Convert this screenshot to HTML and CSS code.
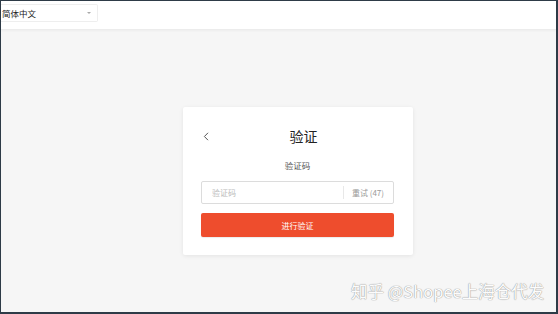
FILE: index.html
```html
<!DOCTYPE html>
<html lang="zh-CN">
<head>
<meta charset="utf-8">
<title>验证</title>
<link rel="stylesheet" href="styles.css">
</head>
<body>
<div class="frame">
  <header class="topbar">
    <div class="lang-select">
      <span class="lang-text">简体中文</span>
      <span class="caret"></span>
    </div>
  </header>
  <main class="main">
    <section class="card">
      <div class="title-row">
        <span class="back">
          <svg width="6" height="9" viewBox="0 0 6 9"><path d="M5 0.8 L1.4 4.5 L5 8.2" fill="none" stroke="#555" stroke-width="1"/></svg>
        </span>
        <h1 class="title">验证</h1>
      </div>
      <div class="label">验证码</div>
      <div class="input-box">
        <span class="placeholder">验证码</span>
        <span class="divider"></span>
        <span class="retry">重试 (47)</span>
      </div>
      <button class="submit">进行验证</button>
    </section>
  </main>
  <div class="watermark">知乎 @Shopee上海仓代发</div>
</div>
</body>
</html>
```
FILE: styles.css
```css
html, body {
  margin: 0;
  padding: 0;
}
body {
  width: 558px;
  height: 314px;
  overflow: hidden;
  font-family: "Noto Sans CJK SC", "Noto Sans", sans-serif;
}
.frame {
  position: relative;
  box-sizing: border-box;
  width: 558px;
  height: 314px;
  border-top: 1px solid #2e3b47;
  border-left: 1px solid #2e3b47;
  border-right: 2px solid #2e3b47;
  border-bottom: 2px solid #2e3b47;
  background: #f6f6f6;
  display: flex;
  flex-direction: column;
}
.topbar {
  height: 29px;
  background: #fff;
  border-bottom: 1px solid #ececec;
  box-shadow: 0 1px 2px rgba(0,0,0,0.04);
  padding-top: 3px;
  box-sizing: border-box;
}
.lang-select {
  width: 97px;
  height: 18px;
  box-sizing: border-box;
  border: 1px solid #eeeeee;
  border-left: none;
  border-radius: 0 2px 2px 0;
  display: flex;
  align-items: center;
  justify-content: space-between;
  padding: 0 6px 0 1px;
}
.lang-text {
  font-size: 8.5px;
  color: #222;
  line-height: 1;
}
.caret {
  width: 0;
  height: 0;
  border-left: 2px solid transparent;
  border-right: 2px solid transparent;
  border-top: 2px solid #aaa;
}
.main {
  flex: 1;
  padding: 77px 0 0 182px;
}
.card {
  width: 230px;
  box-sizing: border-box;
  background: #fff;
  box-shadow: 0 1px 4px rgba(0,0,0,0.08);
  border-radius: 2px;
  padding: 18px 19px 18px 18px;
}
.title-row {
  display: flex;
  align-items: center;
  height: 22px;
}
.back {
  width: 12px;
  display: flex;
  align-items: center;
  padding-left: 2px;
  box-sizing: border-box;
}
.title {
  flex: 1;
  margin: 0;
  text-align: center;
  font-size: 14px;
  font-weight: 400;
  color: #222;
  line-height: 22px;
}
.label {
  margin-top: 11px;
  text-align: center;
  font-size: 8.5px;
  line-height: 14px;
  color: #555;
}
.input-box {
  margin-top: 9px;
  height: 23px;
  box-sizing: border-box;
  border: 1px solid #dcdcdc;
  border-radius: 2px;
  display: flex;
  align-items: center;
  padding: 0 9px 0 10px;
}
.placeholder {
  flex: 1;
  font-size: 8px;
  color: #bbb;
}
.divider {
  width: 1px;
  height: 13px;
  background: #e8e8e8;
  margin-right: 8px;
}
.retry {
  font-size: 8px;
  color: #999;
}
.submit {
  display: block;
  margin-top: 9px;
  width: 100%;
  height: 24px;
  border: none;
  border-radius: 2px;
  background: #ee4d2d;
  color: #fff;
  font-family: "Noto Sans CJK SC", sans-serif;
  font-size: 8px;
  padding: 0;
  box-shadow: 0 1px 1px rgba(0,0,0,0.08);
}
.watermark {
  position: absolute;
  left: 350px;
  top: 278px;
  font-size: 16.5px;
  line-height: 24px;
  color: #fcfcfc;
  white-space: nowrap;
  text-shadow: 0 0 1px #9a9a9a, 0 0 1px #9a9a9a;
}
```
